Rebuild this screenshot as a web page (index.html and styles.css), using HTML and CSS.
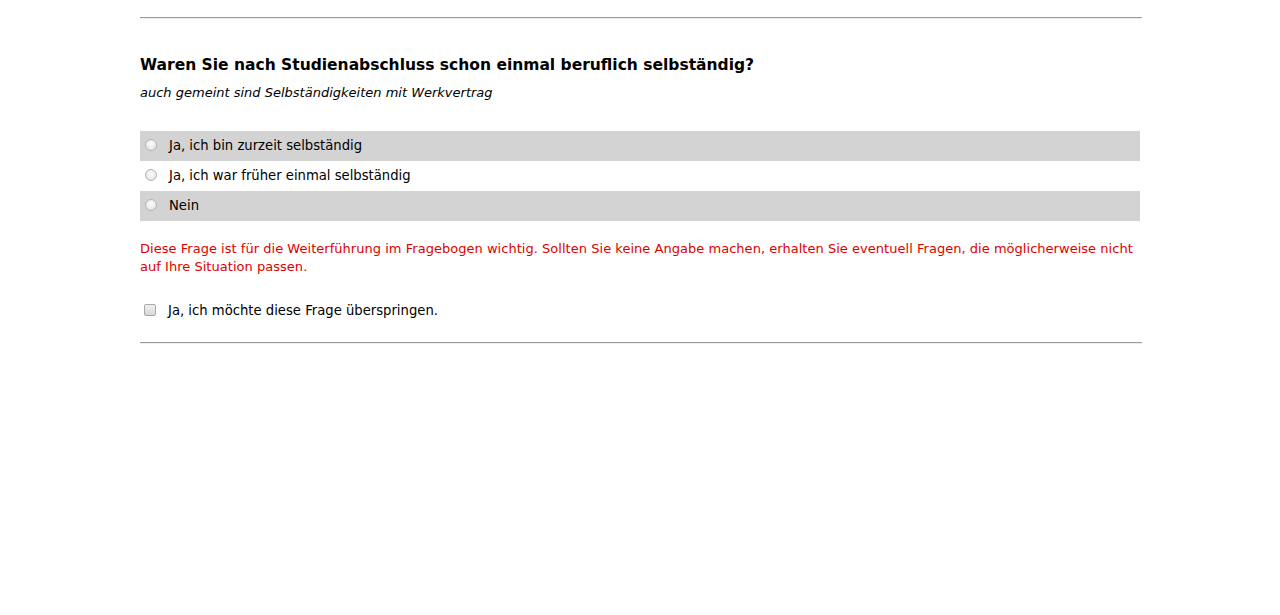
FILE: index.html
```html
<!DOCTYPE html>
<html lang="de">
<head>
<meta charset="utf-8">
<title>Frage</title>
<link rel="stylesheet" href="styles.css">
</head>
<body>
<div class="page">
  <hr class="rule">
  <div class="question">
    <h2 class="q-title">Waren Sie nach Studienabschluss schon einmal beruflich selbständig?</h2>
    <p class="q-hint">auch gemeint sind Selbständigkeiten mit Werkvertrag</p>
    <div class="options">
      <label class="option odd"><span class="radio"></span><span class="opt-text">Ja, ich bin zurzeit selbständig</span></label>
      <label class="option"><span class="radio"></span><span class="opt-text">Ja, ich war früher einmal selbständig</span></label>
      <label class="option odd"><span class="radio"></span><span class="opt-text">Nein</span></label>
    </div>
    <p class="warning">Diese Frage ist für die Weiterführung im Fragebogen wichtig. Sollten Sie keine Angabe machen, erhalten Sie eventuell Fragen, die möglicherweise nicht auf Ihre Situation passen.</p>
    <label class="skip"><span class="checkbox"></span><span class="skip-text">Ja, ich möchte diese Frage überspringen.</span></label>
  </div>
  <hr class="rule">
</div>
</body>
</html>
```

FILE: styles.css
```css
html, body {
  margin: 0;
  padding: 0;
  background: #fff;
}
body {
  font-family: "DejaVu Sans", Verdana, sans-serif;
  font-size: 13.2px;
  line-height: 18px;
  color: #000;
}
.page {
  width: 1000px;
  margin: 0 auto;
  padding-top: 17px;
}
.rule {
  width: 1002px;
  height: 0;
  margin: 0;
  border: 0;
  border-top: 1px solid #9a9a9a;
  border-bottom: 1px solid #eeeeee;
}
.question {
  padding-top: 36px;
  padding-bottom: 22px;
}
.q-title {
  margin: 0;
  font-size: 15.5px;
  line-height: 20px;
  font-weight: bold;
}
.q-hint {
  margin: 9px 0 0 0;
  font-size: 13px;
  font-style: italic;
}
.options {
  margin-top: 29px;
  display: flex;
  flex-direction: column;
}
.option {
  height: 30px;
  display: flex;
  align-items: center;
  padding-left: 5px;
}
.option.odd {
  background: #d3d3d3;
}
.radio {
  width: 10px;
  height: 10px;
  border: 1px solid #b4b4b4;
  border-radius: 50%;
  background: radial-gradient(circle at 50% 40%, #fdfdfd 0%, #ececec 55%, #d8d8d8 100%);
  margin-right: 12px;
  margin-top: -2px;
  flex: none;
}
.warning {
  margin: 19px 0 0 0;
  font-size: 13px;
  letter-spacing: 0.03px;
  color: #dd0000;
}
.skip {
  margin-top: 26px;
  display: flex;
  align-items: center;
  padding-left: 4px;
}
.checkbox {
  width: 10px;
  height: 10px;
  border: 1px solid #a8a8a8;
  border-radius: 2px;
  background: linear-gradient(#f2f2f2, #d6d6d6);
  margin-right: 12px;
  margin-top: -2px;
  flex: none;
}
```
